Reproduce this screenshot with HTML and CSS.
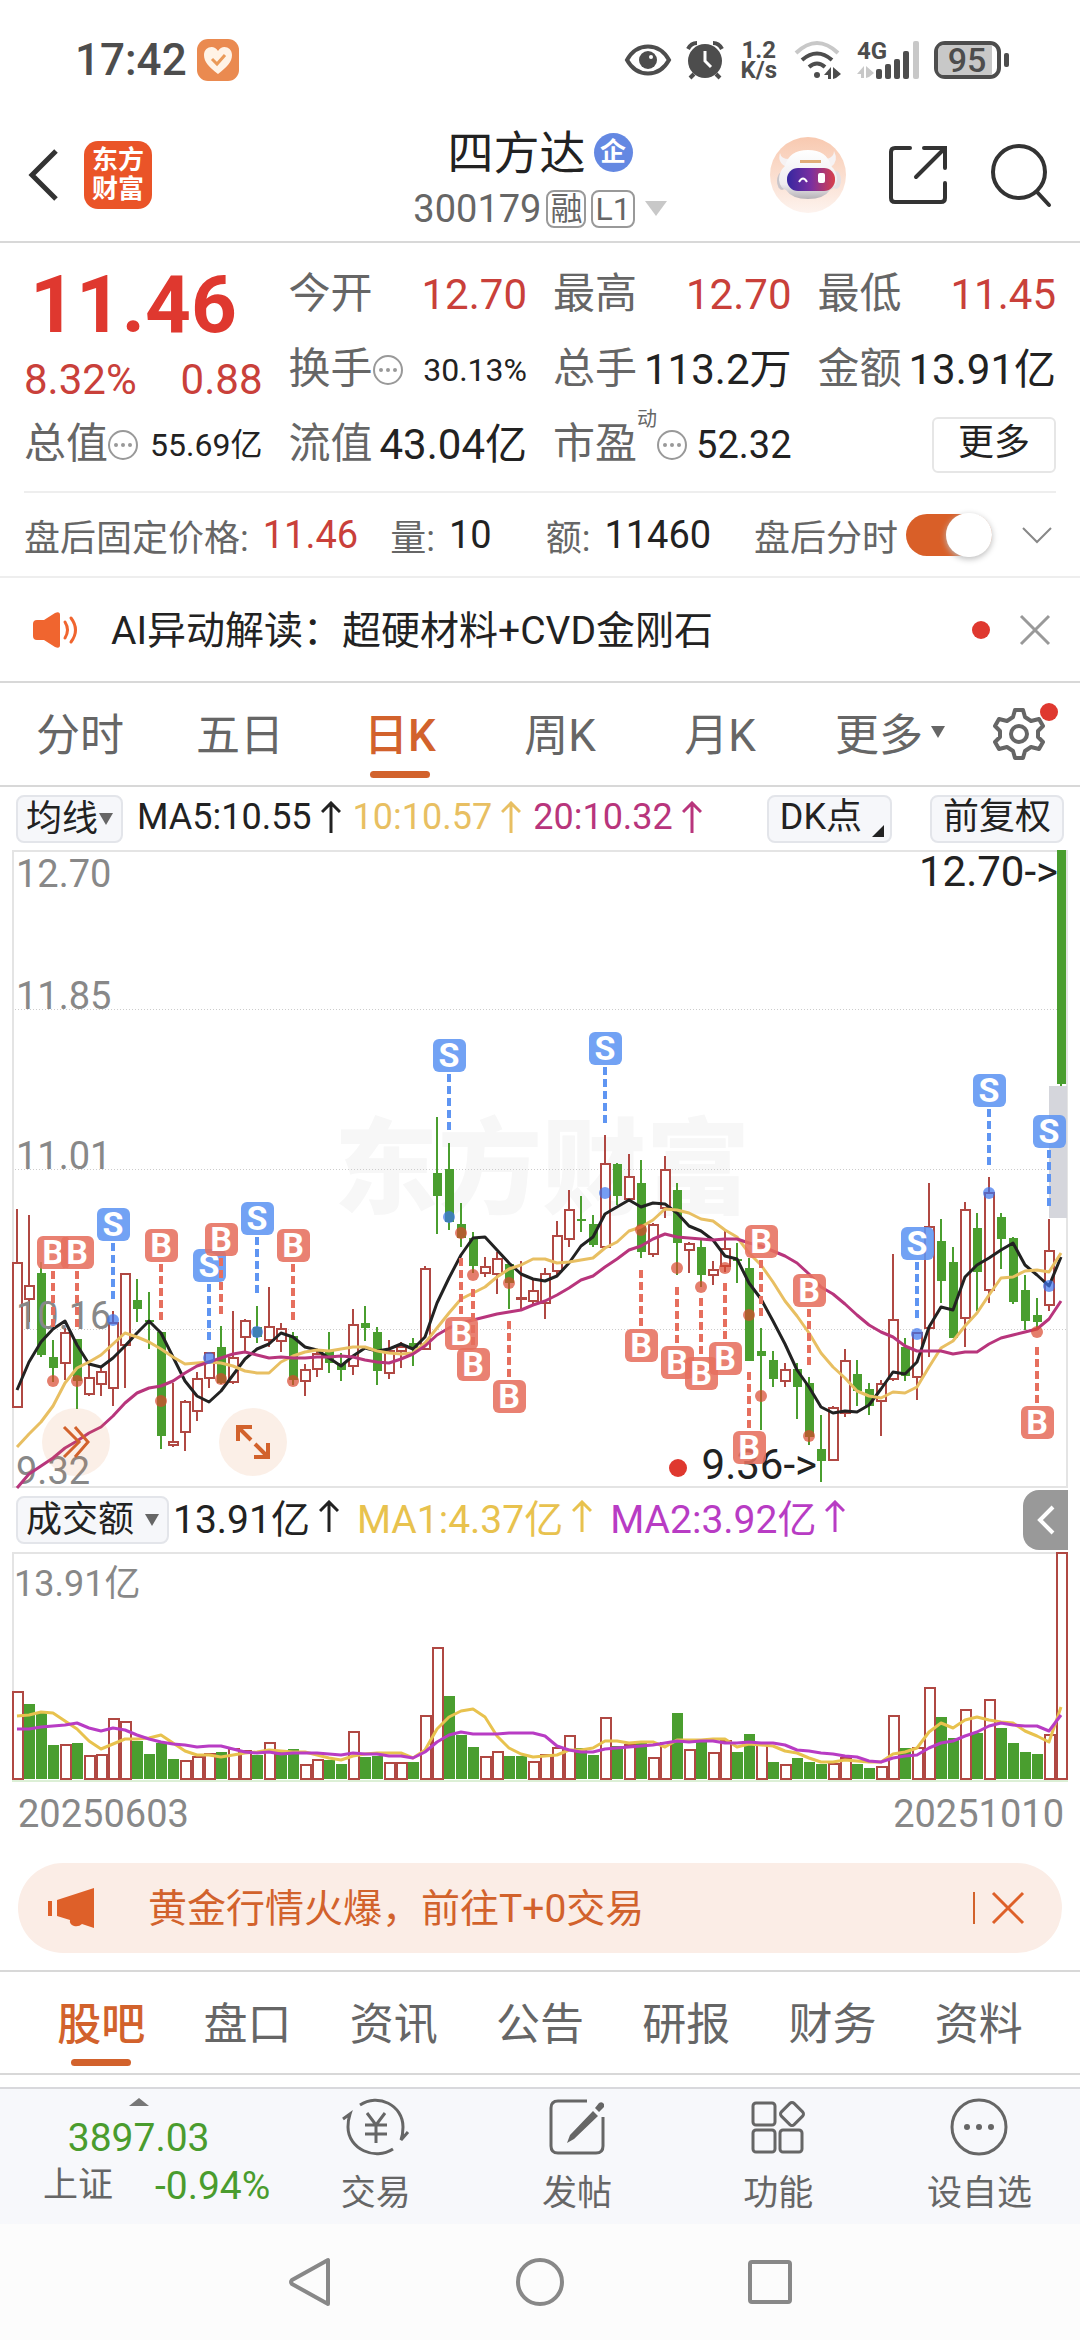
FILE: index.html
```html
<!DOCTYPE html>
<html lang="zh-CN">
<head>
	<meta charset="UTF-8">
	<meta name="viewport" content="width=device-width">
	<title>四方达 300179</title>
	<link rel="stylesheet" href="styles.css">
</head>
<body>
	<div class="status">
		<span class="time">17:42</span>
		<svg class="heart" width="42" height="42" viewBox="0 0 42 42">
			<rect width="42" height="42" rx="11" fill="#ea8a50"/>
			<path d="M21 35C12 28 7 23 7 16c0-8 10-11 14-4 4-7 14-4 14 4 0 7-5 12-14 19z" fill="#fff3e6"/>
			<path d="M15 20l5 5 8-9" fill="none" stroke="#ea9a58" stroke-width="3"/>
		</svg>
		<div class="sys">
			<svg width="46" height="32" viewBox="0 0 46 32">
				<path d="M2 16C12-2 34-2 44 16 34 34 12 34 2 16z" fill="none" stroke="#4d4d4d" stroke-width="4"/>
				<circle cx="23" cy="16" r="9" fill="#4d4d4d"/><circle cx="26" cy="13" r="2" fill="#fff"/>
			</svg>
			<svg width="38" height="38" viewBox="0 0 38 38" fill="none" stroke="#4d4d4d">
				<circle cx="19" cy="20" r="17" fill="#4d4d4d" stroke="none"/>
				<path d="M2 8Q5 2 11 2M36 8q-3-6-9-6" stroke-width="4"/><path d="M8 33l-4 4M30 33l4 4" stroke-width="4"/>
				<path d="M19 10v10l6 6" stroke="#fff" stroke-width="3"/>
			</svg>
			<span class="speed">1.2<br>K/s</span>
			<svg width="48" height="38" viewBox="0 0 48 38" fill="none" stroke="#4d4d4d" stroke-width="4">
				<path d="M2 12Q23-8 44 12" stroke="#c8c8c8"/><path d="M8 19Q23 6 38 19"/><path d="M15 26q8-7 16 0"/>
				<circle cx="23" cy="34" r="3" fill="#4d4d4d" stroke="none"/>
				<path d="M30 34l7-8v12h-3v-4zM39 26l8 7-5 4-3 1z" fill="#4d4d4d" stroke="none"/>
			</svg>
			<svg width="62" height="38" viewBox="0 0 62 38" fill="#4d4d4d">
				<text x="0" y="18" class="net">4G</text>
				<path d="M0 33l7-8v12H4v-4zM9 25l8 7-5 4-3 1z" fill="#c8c8c8"/>
				<rect x="19" y="28" width="6" height="10" rx="2"/><rect x="28" y="23" width="6" height="15" rx="2"/>
				<rect x="37" y="18" width="6" height="20" rx="2"/><rect x="46" y="10" width="6" height="28" rx="2"/>
				<rect x="56" y="0" width="6" height="38" rx="2" fill="#c8c8c8"/>
			</svg>
			<svg width="76" height="38" viewBox="0 0 76 38">
				<rect x="2" y="2" width="63" height="34" rx="9" fill="#fff" stroke="#4d4d4d" stroke-width="4"/>
				<path d="M10 4h48v30H10q-6 0-6-6V10q0-6 6-6z" fill="#c8c8c8"/>
				<rect x="70" y="12" width="5" height="14" rx="2" fill="#4d4d4d"/>
				<text x="33" y="31" text-anchor="middle" class="battery">95</text>
			</svg>
		</div>
	</div>

	<header class="head">
		<div class="side">
			<button class="icon" aria-label="返回">
				<svg width="32" height="54" viewBox="0 0 32 54" fill="none" stroke="#333" stroke-width="5"><path d="M28 3L4 27l24 24"/></svg>
			</button>
			<a href="#" class="logo">东方<br>财富</a>
		</div>
		<div class="name">
			<h1>四方达<span class="firm">企</span></h1>
			<div class="code">300179<span class="tag">融</span><span class="tag">L1</span><i class="tri tri-light"></i></div>
		</div>
		<div class="side side-right">
			<a href="#" class="icon" aria-label="助手">
				<svg width="76" height="76" viewBox="0 0 76 76">
					<defs>
						<linearGradient id="skin" x2="0" y2="1"><stop stop-color="#f8c9b0"/><stop offset="1" stop-color="#fdf3ee"/></linearGradient>
						<linearGradient id="shell" x2="0" y2="1"><stop stop-color="#fff"/><stop offset=".7" stop-color="#eeecef"/><stop offset="1" stop-color="#b5b1b6"/></linearGradient>
						<linearGradient id="visor"><stop stop-color="#3527a0"/><stop offset=".5" stop-color="#7a2fa0"/><stop offset="1" stop-color="#d8404c"/></linearGradient>
					</defs>
					<circle cx="38" cy="38" r="38" fill="url(#skin)"/>
					<path d="M10 16q1 6 9 6l-2 8q-10-4-7-14zM64 14q0 6-7 8l4 8q8-6 3-16z" fill="#f6f2f3"/>
					<ellipse cx="12" cy="44" rx="5" ry="9" fill="#c9c5ca"/><ellipse cx="66" cy="43" rx="5" ry="9" fill="#e4e0e4"/>
					<path d="M38 13q19 0 23 16 6 5 6 14-1 8-7 10-6 9-22 9t-22-9q-6-2-7-10 0-9 6-14 4-16 23-16z" fill="url(#shell)"/>
					<rect x="17" y="31" width="48" height="23" rx="11" fill="url(#visor)"/>
					<path d="M29 45q4-7 8 0" fill="none" stroke="#fff" stroke-width="2"/><rect x="48" y="36" width="7" height="10" rx="2" fill="#fff"/>
					<rect x="30" y="23" width="21" height="3" fill="#e0ad78"/>
				</svg>
			</a>
			<button class="icon" aria-label="分享">
				<svg width="60" height="60" viewBox="0 0 60 60" fill="none" stroke="#333" stroke-width="4" stroke-linecap="round">
					<path d="M22 3H7Q3 3 3 7v46q0 4 4 4h46q4 0 4-4V38"/><path d="M36 3h21v20M56 4L28 32"/>
				</svg>
			</button>
			<button class="icon" aria-label="搜索">
				<svg width="62" height="66" viewBox="0 0 62 66" fill="none" stroke="#333" stroke-width="4" stroke-linecap="round"><circle cx="29" cy="30" r="26"/><path d="M47 50l12 13"/></svg>
			</button>
		</div>
	</header>

	<section class="quote">
		<div class="price">
			<strong>11.46</strong>
			<p><span>8.32%</span><span>0.88</span></p>
		</div>
		<div class="cell"><span>今开</span><b class="up">12.70</b></div>
		<div class="cell"><span>最高</span><b class="up">12.70</b></div>
		<div class="cell"><span>最低</span><b class="up">11.45</b></div>
		<div class="cell"><span>换手</span><i class="more-dot"></i><b class="small">30.13%</b></div>
		<div class="cell"><span>总手</span><b>113.2万</b></div>
		<div class="cell"><span>金额</span><b>13.91亿</b></div>
		<div class="cell"><span>总值</span><i class="more-dot"></i><b class="small">55.69亿</b></div>
		<div class="cell"><span>流值</span><b>43.04亿</b></div>
		<div class="cell"><span>市盈</span><sup>动</sup><i class="more-dot"></i><b class="mid">52.32</b></div>
		<div class="cell"><button class="more">更多</button></div>
	</section>

	<section class="after">
		<span>盘后固定价格:</span><b class="up">11.46</b>
		<span class="vol">量:</span><b>10</b>
		<span class="amt">额:</span><b>11460</b>
		<label for="after">盘后分时</label><input type="checkbox" id="after" class="switch" checked>
		<button class="icon fold" aria-label="展开">
			<svg width="30" height="18" viewBox="0 0 30 18" fill="none" stroke="#888" stroke-width="2"><path d="M1 2l14 14L29 2"/></svg>
		</button>
	</section>

	<section class="news">
		<svg width="46" height="38" viewBox="0 0 46 38" fill="none" stroke="#f0652f" stroke-width="3" stroke-linecap="round">
			<path d="M4 9h7L22 2q5-2 5 2v30q0 4-5 2l-11-7H4q-4 0-4-4V13q0-4 4-4z" fill="#f0652f" stroke="none"/>
			<path d="M32 11q5 8 0 16M38 7q9 12 0 24"/>
		</svg>
		<a href="#">AI异动解读：超硬材料+CVD金刚石</a>
		<i class="dot"></i>
		<button class="icon" aria-label="关闭">
			<svg width="30" height="30" viewBox="0 0 30 30" stroke="#999" stroke-width="3"><path d="M1 1l28 28M29 1L1 29"/></svg>
		</button>
	</section>

	<nav class="tabs period">
		<a href="#">分时</a>
		<a href="#">五日</a>
		<a href="#" class="on">日K</a>
		<a href="#">周K</a>
		<a href="#">月K</a>
		<a href="#">更多<i class="tri"></i></a>
		<button class="icon gear" aria-label="设置">
			<svg width="54" height="54" viewBox="0 0 54 54" fill="none" stroke="#666" stroke-width="4" stroke-linejoin="round">
				<path d="M23 3h8l2 7 6 4 8-2 4 7-5 5v6l5 5-4 7-8-2-6 4-2 7h-8l-2-7-6-4-8 2-4-7 5-5v-6l-5-5 4-7 8 2 6-4z"/><circle cx="27" cy="27" r="8"/>
			</svg>
			<i class="dot"></i>
		</button>
	</nav>

	<div class="bar">
		<label class="pick"><select aria-label="指标"><option>均线</option></select></label>
		<span class="ma">MA5:10.55<svg class="arrow"><use href="#up"/></svg></span>
		<span class="ma yellow">10:10.57<svg class="arrow"><use href="#up"/></svg></span>
		<span class="ma pink">20:10.32<svg class="arrow"><use href="#up"/></svg></span>
		<button class="chip dk">DK点</button>
		<button class="chip">前复权</button>
	</div>

	<div class="chart">
		<svg viewBox="0 0 1056 638" id="kline">
			<text x="530" y="356" text-anchor="middle" class="mark">东方财富</text>
			<path d="M0 159.500H1056M0 319.500H1056M0 479.500H1056" class="grid"/>
			<path d="M0 1H1056M0 637H1056M1 0V638M1055 0V638" class="frame"/>
			<rect x="1037" y="236" width="18" height="132" fill="#d5d6dc"/>
			<g id="candles"></g>
			<g class="axis">
				<text x="4" y="37">12.70</text><text x="4" y="159">11.85</text><text x="4" y="319">11.01</text>
				<text x="4" y="479">10.16</text><text x="4" y="634">9.32</text>
			</g>
			<g id="lines" class="lines"></g>
			<text x="1046" y="36" text-anchor="end" class="peak">12.70-&gt;</text>
			<circle cx="666" cy="618" r="9" fill="#df382f"/>
			<text x="805" y="629" text-anchor="end" class="peak">9.36-&gt;</text>
			<g id="marks"></g>
		</svg>
		<button class="round next" aria-label="快进">
			<svg width="30" height="32" viewBox="0 0 30 32" fill="none" stroke="#d2622c" stroke-width="3"><path d="M3 1l15 15L3 31M14 1l13 15-13 15"/></svg>
		</button>
		<button class="round full" aria-label="全屏">
			<svg width="36" height="36" viewBox="0 0 36 36" fill="none" stroke="#d2622c" stroke-width="4"><path d="M3 17V3h14M4 4l12 12M33 19v14H19M32 32L20 20"/></svg>
		</button>
	</div>

	<div class="bar bar-vol">
		<label class="pick"><select aria-label="副图"><option>成交额</option></select></label>
		<span class="ma">13.91亿<svg class="arrow"><use href="#up"/></svg></span>
		<span class="ma yellow2">MA1:4.37亿<svg class="arrow"><use href="#up"/></svg></span>
		<span class="ma purple">MA2:3.92亿<svg class="arrow"><use href="#up"/></svg></span>
		<button class="pull" aria-label="收起">
			<svg width="18" height="28" viewBox="0 0 18 28" fill="none" stroke="#fff" stroke-width="4"><path d="M16 1L3 14l13 13"/></svg>
		</button>
	</div>

	<div class="chart">
		<svg viewBox="0 0 1056 230" id="volume">
			<path d="M0 1H1056M1 0V230M1055 0V230" class="frame"/>
			<path d="M0 229H1056" stroke="#dcefd6" stroke-width="2"/>
			<text x="2" y="44" class="total">13.91亿</text>
			<g id="bars"></g>
			<g id="vlines" class="lines"></g>
		</svg>
	</div>
	<div class="dates"><span>20250603</span><span>20251010</span></div>

	<div class="banner">
		<svg width="48" height="42" viewBox="0 0 48 42" fill="#de6029"><path d="M0 14h4v15H0zM9 13L46 1v40l-12-4q-3 3-8 2-5-2-4-6L9 29z"/></svg>
		<a href="#">黄金行情火爆，前往T+0交易</a>
		<button class="icon" aria-label="关闭">
			<svg width="32" height="32" viewBox="0 0 32 32" stroke="#de6029" stroke-width="3"><path d="M1 1l30 30M31 1L1 31"/></svg>
		</button>
	</div>

	<nav class="tabs info">
		<a href="#" class="on">股吧</a>
		<a href="#">盘口</a>
		<a href="#">资讯</a>
		<a href="#">公告</a>
		<a href="#">研报</a>
		<a href="#">财务</a>
		<a href="#">资料</a>
	</nav>

	<footer class="foot">
		<a href="#" class="index">
			<i class="tri tri-up"></i>
			<b>3897.03</b>
			<p><span>上证</span><em>-0.94%</em></p>
		</a>
		<a href="#">
			<svg width="66" height="58" viewBox="0 0 66 58" fill="none" stroke="#666" stroke-width="3">
				<path d="M17 7C35-5 60 7 60 29q0 7-2 13l7-8M50 51C32 63 5 51 5 29q0-7 2-13l-7 5M24 15l9 12 9-12M22 27h22M22 36h22M33 27v18"/>
			</svg>
			<span>交易</span>
		</a>
		<a href="#">
			<svg width="56" height="58" viewBox="0 0 56 58" fill="none" stroke="#666" stroke-width="3">
				<path d="M38 3H9Q2 3 2 10v38q0 7 7 7h38q7 0 7-7V19"/><path d="M44 13l5 5-24 23-7 4 3-8zM46 10l4-5q3-2 5 1v3l-5 5z" fill="#666" stroke="none"/>
			</svg>
			<span>发帖</span>
		</a>
		<a href="#">
			<svg width="54" height="58" viewBox="0 0 54 58" fill="none" stroke="#666" stroke-width="3">
				<rect x="2" y="5" width="22" height="22" rx="3"/><rect x="2" y="32" width="22" height="22" rx="3"/><rect x="29" y="32" width="22" height="22" rx="3"/>
				<rect x="32" y="7" width="18" height="18" rx="3" transform="rotate(45 41 16)"/>
			</svg>
			<span>功能</span>
		</a>
		<a href="#">
			<svg width="58" height="58" viewBox="0 0 58 58" fill="none" stroke="#666" stroke-width="3">
				<circle cx="29" cy="29" r="27"/><g fill="#666" stroke="none"><circle cx="17" cy="29" r="3"/><circle cx="29" cy="29" r="3"/><circle cx="41" cy="29" r="3"/></g>
			</svg>
			<span>设自选</span>
		</a>
	</footer>

	<div class="keys">
		<button class="icon" aria-label="后退"><svg width="46" height="50" viewBox="0 0 46 50"><path d="M41 3v44L5 27q-2-2 0-4z"/></svg></button>
		<button class="icon" aria-label="主页"><svg width="50" height="50" viewBox="0 0 50 50"><circle cx="25" cy="25" r="22"/></svg></button>
		<button class="icon" aria-label="任务"><svg width="46" height="50" viewBox="0 0 46 50"><rect x="3" y="5" width="40" height="40" rx="2"/></svg></button>
	</div>

	<svg class="defs">
		<symbol id="up" viewBox="0 0 20 32"><path d="M10 32V2M1 11l9-9 9 9" fill="none" stroke="currentColor" stroke-width="3"/></symbol>
	</svg>
	<script src="chart.js"></script>
</body>
</html>
```
FILE: styles.css
```css
*{box-sizing: border-box;}
body,h1,p{margin: 0;padding: 0;}
body{font-family: Roboto, "Noto Sans CJK SC", sans-serif;background: #fff;color: #222;}
a{text-decoration: none;color: inherit;}
b,i,em{font-weight: normal;font-style: normal;}
button,select,input{font-family: inherit;color: inherit;margin: 0;padding: 0;border: none;background: none;}
svg{display: block;flex: none;overflow: visible;}
.defs{width: 0;height: 0;position: absolute;}
.icon{display: block;flex: none;position: relative;}
.up{color: #c9403a;}
.dot{display: block;width: 18px;height: 18px;border-radius: 50%;background: #df382f;}
.tri{display: inline-block;border: 7px solid transparent;border-top: 12px solid #666;border-bottom: none;}

/* 状态栏 */
.status{height: 120px;padding: 0 70px 0 75px;display: flex;align-items: center;color: #4d4d4d;}
.time{font-size: 44px;font-weight: 500;}
.heart{margin-left: 10px;}
.sys{margin-left: auto;display: flex;align-items: center;gap: 15px;}
.speed{font-size: 24px;line-height: 20px;font-weight: 700;text-align: center;padding: 0 2px;}
.net{font-size: 24px;font-weight: 700;}
.battery{font-size: 34px;font-weight: 500;fill: #4d4d4d;}

/* 标题 */
.head{height: 123px;padding: 0 28px 12px;display: flex;align-items: center;border-bottom: 2px solid #d8d8d8;}
.side{flex: 1;display: flex;align-items: center;gap: 24px;}
.side-right{justify-content: flex-end;gap: 42px;}
.logo{width: 68px;height: 68px;border-radius: 14px;background: #ea5428;color: #fff;font-size: 26px;line-height: 29px;font-weight: 700;text-align: center;padding-top: 5px;}
.name{text-align: center;padding-top: 10px;}
h1{font-size: 46px;line-height: 58px;font-weight: 400;display: flex;align-items: center;justify-content: center;}
.firm{width: 39px;height: 39px;border-radius: 50%;background: #6488e2;color: #fff;font-size: 26px;line-height: 38px;font-weight: 700;margin-left: 8px;}
.code{font-size: 38px;line-height: 54px;color: #666;display: flex;align-items: center;justify-content: center;}
.tag{font-size: 32px;line-height: 34px;height: 38px;padding: 0 2px;border: 2px solid #999;border-radius: 8px;margin-left: 5px;}
.tri-light{border-width: 15px 11px 0;border-top-color: #c8c8c8;margin-left: 10px;}

/* 行情 */
.quote{margin: 0 24px;padding: 14px 0 9px;display: grid;grid-template-columns: repeat(4, 1fr);grid-auto-rows: 75px;column-gap: 26px;border-bottom: 2px solid #eee;}
.price{grid-row: span 2;color: #df382f;}
.price strong{display: block;font-size: 80px;line-height: 96px;font-weight: 700;padding-left: 6px;}
.price p{display: flex;justify-content: space-between;font-size: 42px;line-height: 54px;color: #c9403a;}
.cell{display: flex;align-items: center;font-size: 42px;line-height: 60px;color: #666;white-space: nowrap;}
.cell span{padding-bottom: 2px;}
.cell b{margin-left: auto;color: #222;}
.cell .up{color: #c9403a;}
.cell .small{font-size: 32px;}
.cell .mid{font-size: 38px;}
.cell sup{font-size: 20px;line-height: 24px;align-self: flex-start;}
.more-dot{width: 30px;height: 30px;border: 2px solid #999;border-radius: 50%;display: flex;align-items: center;justify-content: center;}
.more-dot::before{content: "";width: 4px;height: 4px;border-radius: 50%;background: #999;box-shadow: -7px 0 #999, 7px 0 #999;}
.more{margin-left: auto;width: 124px;height: 56px;padding-bottom: 4px;border: 2px solid #e6e6e6;border-radius: 6px;font-size: 36px;line-height: 44px;color: #222;}

.after{height: 85px;padding: 0 28px 0 24px;display: flex;align-items: center;font-size: 36px;color: #666;border-bottom: 2px solid #eee;white-space: nowrap;}
.after b{font-size: 38px;margin-left: 14px;color: #222;}
.after .up{color: #c9403a;}
.vol{margin-left: 32px;}
.amt{margin-left: 54px;}
.after label{margin-left: auto;}
.switch{appearance: none;width: 86px;height: 42px;margin-left: 8px;border-radius: 21px;background: #d95f28;position: relative;}
.switch::after{content: "";position: absolute;right: 0;top: -1px;width: 46px;height: 44px;border-radius: 22px;background: #fff;box-shadow: 0 2px 6px #bbb;}
.switch:not(:checked){background: #ccc;}
.fold{margin-left: 30px;}

.news{height: 105px;padding: 0 30px 0 33px;display: flex;align-items: center;font-size: 39px;border-bottom: 2px solid #d8d8d8;}
.news a{flex: 1;margin-left: 32px;padding-bottom: 6px;}
.news .icon{margin-left: 30px;}

/* 标签 */
.tabs{height: 104px;display: grid;align-items: stretch;border-bottom: 2px solid #d8d8d8;font-size: 44px;color: #666;}
.tabs a{position: relative;display: flex;align-items: center;justify-content: center;white-space: nowrap;padding-bottom: 4px;}
.tabs .on{color: #d2622c;font-weight: 500;}
.tabs .on::after{content: "";position: absolute;left: 50%;margin-left: -30px;bottom: 7px;width: 60px;height: 7px;border-radius: 4px;background: #d2622c;}
.tabs .tri{margin-left: 8px;}
.period{grid-template-columns: repeat(5, 160fr) 180fr 100fr;}
.gear{justify-self: start;padding-left: 12px;}
.gear .dot{position: absolute;right: -12px;top: 20px;}
.info{grid-template-columns: repeat(7, 1fr);padding: 0 28px;}

/* 指标栏 */
.bar{height: 63px;padding: 0 16px;display: flex;align-items: center;font-size: 36px;white-space: nowrap;}
.ma{display: flex;align-items: center;margin-left: 14px;padding-bottom: 4px;}
.ma + .ma{margin-left: 12px;}
.pick,.chip{height: 48px;border: 2px solid #e3e5ea;border-radius: 8px;background: #f6f7fa;}
.pick{display: flex;align-items: center;padding: 0 8px;}
.pick select{appearance: none;font-size: 36px;line-height: 42px;height: 44px;}
.pick::after{content: "";border: 7px solid transparent;border-top: 12px solid #666;border-bottom: none;}
.arrow{width: 20px;height: 32px;margin-left: 9px;}
.yellow{color: #e8bf62;}
.yellow2{color: #e8c24e;}
.pink{color: #b8357c;}
.purple{color: #b83cc4;}
.chip{font-size: 36px;line-height: 40px;padding: 0 11px 4px;}
.dk{margin-left: auto;margin-right: 38px;position: relative;padding-right: 28px;}
.dk::after{content: "";position: absolute;right: 6px;bottom: 4px;border-left: 12px solid transparent;border-bottom: 12px solid #222;}
.bar-vol{height: 64px;padding-right: 12px;font-size: 39px;}
.bar-vol .ma{margin-left: 4px;padding-bottom: 8px;}
.bar-vol .ma + .ma{margin-left: 18px;}
.bar-vol .pick::after{margin-left: 10px;}
.pull{margin-left: auto;width: 45px;height: 60px;border-radius: 16px 0 0 16px;background: #999;display: flex;align-items: center;justify-content: center;}

/* 图表 */
.chart{margin: 0 12px;position: relative;}
.chart > svg{width: 100%;height: auto;}
.frame{stroke: #e4e4e4;stroke-width: 2;}
.grid{stroke: #ccc;stroke-width: 1;stroke-dasharray: 1 2;}
.mark{font-size: 104px;font-weight: 900;fill: #f7f7f7;}
.axis{font-size: 38px;fill: #888;}
.total{font-size: 36px;fill: #888;}
.peak{font-size: 42px;fill: #222;}
.lines{fill: none;stroke-width: 3;stroke-linejoin: round;}
.sign{font-size: 34px;font-weight: 700;fill: #fff;}
.round{position: absolute;bottom: 12px;width: 68px;height: 68px;border-radius: 50%;background: rgba(226, 120, 60, .12);display: flex;align-items: center;justify-content: center;}
.next{left: 30px;}
.full{left: 207px;}
.dates{padding: 0 16px 0 18px;height: 81px;line-height: 64px;display: flex;justify-content: space-between;font-size: 38px;color: #888;}

.banner{height: 90px;margin: 0 18px 17px;padding: 0 38px 0 30px;border-radius: 45px;background: #fbede6;color: #d2622c;font-size: 39px;display: flex;align-items: center;}
.banner a{flex: 1;margin-left: 52px;padding-bottom: 6px;}
.banner .icon{padding-left: 17px;border-left: 2px solid #d2622c;}
.info{border-top: 2px solid #d8d8d8;height: 105px;}

/* 底部 */
.foot{height: 137px;margin-top: 12px;display: grid;grid-template-columns: 275fr repeat(4, 201fr);background: #f7f8fb;border-top: 2px solid #d8d8dc;color: #666;font-size: 35px;line-height: 48px;}
.foot a{display: flex;flex-direction: column;align-items: center;padding-top: 9px;}
.foot svg{margin-bottom: 14px;}
.foot b{color: #4a9c2e;font-size: 39px;line-height: 48px;margin-top: 8px;}
.foot em{color: #4a9c2e;font-size: 39px;}
.foot .index{padding-left: 2px;}
.foot p{display: flex;justify-content: space-between;gap: 42px;padding-left: 36px;}
.tri-up{border: 10px solid transparent;border-top: none;border-bottom: 8px solid #777;}
.keys{height: 116px;background: #fcfcfc;display: flex;align-items: center;justify-content: center;gap: 182px;}
.keys svg{fill: none;stroke: #888;stroke-width: 4;stroke-linejoin: round;}
```
FILE: chart.js
```javascript
/*K线: [颜色, 最高, 实体上沿, 实体下沿, 最低]，三个单位为一像素，0在图内170px处*/
var aDay = [
	['r',567,725,1165,1165],['r',585,795,840,905],['g',725,760,1004,1010],['g',960,1010,1044,1085],['r',925,935,1033,1080],['g',958,958,1083,1168],
	['r',1035,1070,1125,1128],['r',1040,1052,1096,1128],['r',873,905,1108,1157],['r',758,758,977,1105],['g',777,840,867,907],['g',816,900,906,987],
	['g',935,935,1248,1287],['r',1090,1263,1277,1282],['r',1140,1143,1238,1293],['r',1055,1075,1177,1202],['r',995,997,1078,1105],['g',918,981,1090,1092],
	['r',873,1010,1090,1093],['r',898,901,955,1000],['g',857,920,950,968],['r',800,917,962,980],['r',908,923,966,997],['g',935,948,1080,1095],
	['r',1032,1048,1085,1128],['r',990,1000,1050,1070],['g',936,990,1030,1060],['g',1000,1030,1050,1082],['r',868,911,1040,1065],['g',857,908,924,963],
	['g',920,936,1054,1094],['r',960,990,1063,1076],['r',965,978,995,1043],['g',953,970,985,1037],['r',738,743,990,990],['g',290,459,528,641],
	['g',369,448,606,629],['g',550,612,654,680],['g',636,654,738,760],['r',710,737,763,770],['r',697,713,766,822],['g',732,732,790,867],
	['r',722,832,840,868],['r',780,809,847,852],['r',744,758,853,896],['r',602,646,755,770],['r',511,566,661,680],['g',528,597,601,635],
	['g',585,612,675,682],['r',346,430,683,683],['g',430,431,528,556],['r',403,469,540,545],['g',420,488,697,714],['r',608,611,706,710],
	['r',408,447,566,595],['g',488,510,669,765],['r',667,669,694,760],['g',660,681,765,800],['r',722,747,768,794],['r',632,685,740,757],
	['g',669,718,724,790],['g',715,743,1022,1022],['g',925,993,1008,1229],['g',993,1021,1078,1100],['r',1028,1047,1085,1100],['g',1028,1048,1102,1197],
	['g',1072,1089,1250,1276],['g',1186,1287,1322,1385],['r',1157,1162,1324,1324],['r',988,1019,1183,1190],['g',1020,1061,1112,1157],['g',1090,1106,1158,1186],
	['r',1080,1088,1147,1248],['r',703,896,1080,1083],['g',953,982,1068,1083],['r',935,937,1074,1140],['r',488,617,926,1010],['g',596,663,783,850],
	['g',681,727,953,953],['r',545,566,898,980],['g',579,624,755,873],['r',471,515,813,850],['g',579,591,658,748],['g',652,654,846,851],
	['g',766,811,903,930],['g',834,885,907,930],['r',596,691,858,873],['g',-510,-510,193,199]
];
var aMa = {
	'#222': [1110,1025,965,928,902,975,1032,1040,1013,978,938,903,940,1010,1082,1128,1146,1112,1065,1018,988,972,938,950,980,990,1015,1038,1008,983,993,987,971,988,950,850,775,705,653,652,690,730,763,778,783,768,728,678,650,583,560,541,560,548,551,578,618,633,660,707,718,788,838,903,972,1050,1100,1160,1178,1173,1175,1155,1108,1056,1063,1027,920,860,870,770,735,713,690,668,735,765,797,710],
	'#e8bf62': [1280,1243,1205,1157,1090,1043,1025,1005,972,940,952,967,988,1010,1033,1030,1025,1028,1038,1052,1058,1060,1025,1008,995,990,993,988,980,982,993,1000,1003,998,968,925,880,838,820,802,770,748,735,716,718,730,725,720,714,685,665,632,620,600,568,570,578,596,603,630,650,700,735,785,842,887,940,998,1040,1073,1112,1128,1135,1116,1119,1102,1040,985,963,918,880,825,775,770,752,750,757,700],
	'#b8357c': [1405,1363,1338,1315,1285,1263,1240,1220,1187,1150,1118,1105,1098,1083,1060,1038,1025,1015,1003,996,1004,1013,1010,1013,1015,1012,1010,1008,1012,1020,1027,1029,1017,1003,978,945,925,908,900,890,881,875,870,856,843,825,803,781,767,742,716,690,677,658,643,650,653,658,659,657,658,668,678,693,707,730,762,800,823,853,885,915,935,950,978,993,992,992,1001,996,997,972,955,945,937,928,898,842]
};
/*买卖点: [第几天, 类型, 标签位置, 圆点位置]*/
var aMark = [
	[3,'B',695,1083],[5,'B',695,1083],[8,'S',611,901],[12,'B',675,1143],[16,'S',735,1015],[17,'B',657,1077],[20,'S',594,936],[23,'B',675,1083],
	[36,'S',105,590],[37,'B',938,638],[38,'B',1032,766],[41,'B',1128,790],[49,'S',84,519],[52,'B',975,631],[55,'B',1025,743],[57,'B',1058,800],
	[59,'B',1013,743],[61,'B',1280,885],[62,'B',663,1128],[66,'B',810,1248],[75,'S',668,941],[81,'S',210,520],[85,'B',1206,936],[86,'S',333,799]
];
var aVol = [265,225,197,102,105,108,72,75,183,174,114,75,108,60,57,68,78,81,92,86,72,111,80,90,45,60,58,45,144,66,70,52,52,51,193,396,249,132,96,70,84,69,69,55,75,97,132,92,72,187,100,105,107,65,111,198,91,112,80,118,81,135,105,51,44,63,51,45,47,67,45,33,39,192,93,95,276,186,122,209,138,239,153,108,81,75,135,681];
//成交额里与K线颜色不同的几天
var aSwap = {1:'g', 13:'g', 22:'g', 35:'r', 42:'g', 62:'r', 87:'r'};
var aVma = {
	'#e8c24e': [190,192,202,198,175,150,115,90,105,121,121,123,132,107,85,72,72,67,73,79,80,86,84,82,80,72,63,58,70,76,77,78,79,62,88,150,187,205,210,185,128,92,75,67,70,73,87,88,93,115,113,109,112,112,96,118,116,118,120,120,97,105,102,98,85,78,64,52,52,57,53,50,50,75,82,93,140,169,154,178,186,178,170,168,145,130,112,215],
	'#b83cc4': [150,150,156,160,163,168,153,144,154,147,133,120,110,105,102,96,99,99,90,81,78,80,76,79,79,78,75,73,78,76,75,69,69,62,80,112,132,141,136,136,136,138,138,138,128,100,87,82,82,90,92,96,99,102,107,113,112,114,114,109,108,111,109,108,103,88,84,79,75,70,66,55,50,62,68,72,92,108,115,130,140,160,168,162,159,158,145,193]
};
var red = '#b04843', green = '#4a9e2f';

function px(i){
	return 5 + i*12;
}
function py(v){
	return Math.round(170 + v/3);
}
function vy(v){
	return Math.round(227 - v/3);
}
function line(arr, color, fn){
	var pts = [];
	for (var i=0,len=arr.length;i<len;i++){
		pts.push(px(i) + ',' + fn(arr[i]));
	}
	return '<polyline points="' + pts.join(' ') + '" stroke="' + color + '"/>';
}

function candles(){
	var html = '';
	for (var i=0,len=aDay.length;i<len;i++){
		var d = aDay[i], x = px(i), t = py(d[2]), b = py(d[3]);
		var color = d[0] == 'r' ? red : green;
		html += '<path d="M' + x + ' ' + py(d[1]) + 'V' + t + 'M' + x + ' ' + b + 'V' + py(d[4]) + '" stroke="' + color + '" stroke-width="2"/>';
		if (d[0] == 'r'){
			html += '<rect x="' + (x-4) + '" y="' + (t+1) + '" width="9" height="' + Math.max(b-t-2, 1) + '" fill="#fff" stroke="' + red + '" stroke-width="2"/>';
		}else{
			html += '<rect x="' + (x-4) + '" y="' + t + '" width="9" height="' + Math.max(b-t, 2) + '" fill="' + green + '"/>';
		}
	}
	return html;
}

function marks(){
	var html = '';
	for (var i=0,len=aMark.length;i<len;i++){
		var m = aMark[i], x = px(m[0]), y = py(m[2]);
		var color = m[1] == 'B' ? '#e66f5e' : '#5f95f2';
		var dir = m[3] > m[2] ? 1 : -1;
		html += '<circle cx="' + x + '" cy="' + py(m[3]) + '" r="6" fill="' + (m[1] == 'B' ? '#d9472e' : '#3b73ee') + '" opacity=".7"/>';
		html += '<path d="M' + x + ' ' + (y+dir*19) + 'v' + dir*56 + '" stroke="' + color + '" stroke-width="4" stroke-dasharray="8 4"/>';
		html += '<rect x="' + (x-16) + '" y="' + (y-16) + '" width="33" height="33" rx="6" fill="' + color + '" opacity=".88"/>';
		html += '<text x="' + x + '" y="' + (y+12) + '" text-anchor="middle" class="sign">' + m[1] + '</text>';
	}
	return html;
}

function bars(){
	var html = '';
	for (var i=0,len=aVol.length;i<len;i++){
		var x = px(i), t = vy(aVol[i]), c = aSwap[i] || aDay[i][0];
		if (c == 'r'){
			html += '<rect x="' + (x-4) + '" y="' + (t+1) + '" width="10" height="' + (226-t) + '" fill="#fff" stroke="' + red + '" stroke-width="2"/>';
		}else{
			html += '<rect x="' + (x-5) + '" y="' + t + '" width="11" height="' + (227-t) + '" fill="' + green + '"/>';
		}
	}
	return html;
}

function lines(obj, fn){
	var html = '';
	for (var color in obj){
		html += line(obj[color], color, fn);
	}
	return html;
}

document.getElementById('candles').innerHTML = candles();
document.getElementById('lines').innerHTML = lines(aMa, py);
document.getElementById('marks').innerHTML = marks();
document.getElementById('bars').innerHTML = bars();
document.getElementById('vlines').innerHTML = lines(aVma, vy);
```
